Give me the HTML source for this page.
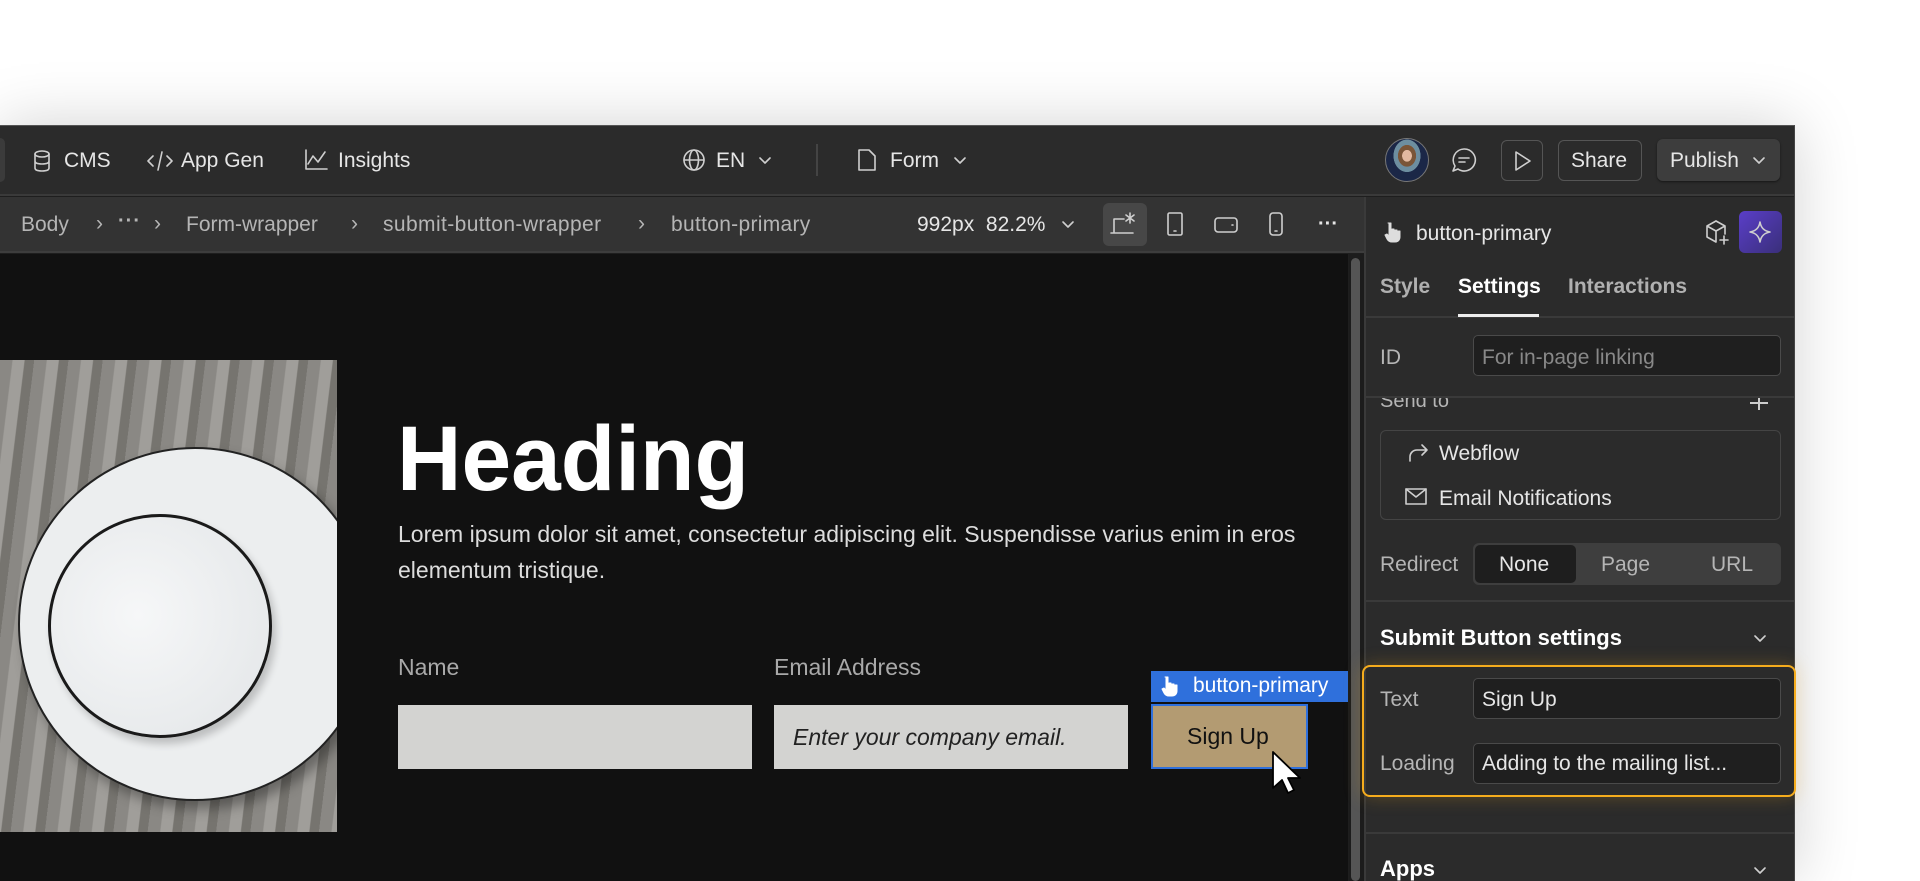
<!DOCTYPE html>
<html><head><meta charset="utf-8">
<style>
*{box-sizing:border-box;margin:0;padding:0}
html,body{width:1920px;height:881px;overflow:hidden}
body{background:#fff;font-family:"Liberation Sans",sans-serif;position:relative}
.a{position:absolute}
.win{left:0;top:125px;width:1795px;height:756px;background:#1e1e1e;box-shadow:0 0 60px rgba(0,0,0,.18);border-top:1px solid #555;border-right:1px solid #444}
.t{color:#e6e6e6;font-size:20px;white-space:nowrap}
.g{color:#b5b5b5}
.bc{font-size:21px}
svg{position:absolute;fill:none;stroke:#cfcfcf;stroke-width:1.6;stroke-linecap:round;stroke-linejoin:round}
.inp{background:#1f1f1f;border:1px solid #4a4a4a;border-radius:5px}
</style></head><body>
<div class="a win"></div>
<!-- top bar -->
<div class="a" style="left:0;top:126px;width:1794px;height:70px;background:#2b2b2b;border-bottom:2px solid #3a3a3a"></div>
<div class="a" style="left:0;top:138px;width:5px;height:44px;background:#3b3b3b;border-radius:0 5px 5px 0"></div>
<svg style="left:32px;top:150px" width="20" height="22" viewBox="0 0 20 22"><ellipse cx="10" cy="4" rx="7" ry="3"/><path d="M3 4v14c0 2 3 3 7 3s7-1 7-3V4M3 11c0 2 3 3 7 3s7-1 7-3"/></svg>
<div class="a t" style="left:64px;top:149px;font-size:21px">CMS</div>
<svg style="left:147px;top:150px" width="26" height="22" viewBox="0 0 26 22"><path d="M6 6l-5 5 5 5M20 6l5 5-5 5M15 2l-4 18"/></svg>
<div class="a t" style="left:181px;top:149px;font-size:21px">App Gen</div>
<svg style="left:304px;top:149px" width="24" height="22" viewBox="0 0 24 22"><path d="M2 1v19h21M4 15l5-8 5 6 7-10"/></svg>
<div class="a t" style="left:338px;top:149px;font-size:21px">Insights</div>
<svg style="left:682px;top:148px" width="24" height="24" viewBox="0 0 24 24"><circle cx="12" cy="12" r="10"/><ellipse cx="12" cy="12" rx="4.5" ry="10"/><path d="M2 12h20"/></svg>
<div class="a t" style="left:716px;top:149px;font-size:21px">EN</div>
<svg style="left:758px;top:156px" width="14" height="9" viewBox="0 0 14 9"><path d="M2 2l5 5 5-5"/></svg>
<div class="a" style="left:816px;top:144px;width:2px;height:32px;background:#444"></div>
<svg style="left:857px;top:148px" width="20" height="24" viewBox="0 0 20 24"><path d="M2 2h10l6 6v14H2z"/></svg>
<div class="a t" style="left:890px;top:149px;font-size:21px">Form</div>
<svg style="left:953px;top:156px" width="14" height="9" viewBox="0 0 14 9"><path d="M2 2l5 5 5-5"/></svg>
<div class="a" style="left:1385px;top:138px;width:44px;height:44px;border-radius:50%;background:radial-gradient(ellipse at 50% 40%,#e3b9a0 0 16%,#7a5538 17% 30%,#6d8ea0 31% 45%,#1b2747 46%);border:1px solid #777"></div>
<svg style="left:1451px;top:147px" width="26" height="26" viewBox="0 0 26 26"><path d="M13 2a11 11 0 1 1-6 20L2 24l2-5A11 11 0 0 1 13 2zM8 11h10M8 15h6"/></svg>
<div class="a" style="left:1501px;top:140px;width:42px;height:41px;border:1.5px solid #555;border-radius:6px"></div>
<svg style="left:1513px;top:150px" width="20" height="22" viewBox="0 0 20 22"><path d="M3 2l14 9-14 9z"/></svg>
<div class="a" style="left:1558px;top:140px;width:84px;height:41px;border:1.5px solid #555;border-radius:6px"></div>
<div class="a t" style="left:1571px;top:149px;font-size:21px">Share</div>
<div class="a" style="left:1657px;top:139px;width:123px;height:42px;background:#3d3d3d;border-radius:6px;box-shadow:0 1px 2px rgba(0,0,0,.5)"></div>
<div class="a t" style="left:1670px;top:149px;font-size:21px">Publish</div>
<svg style="left:1752px;top:156px" width="14" height="9" viewBox="0 0 14 9"><path d="M2 2l5 5 5-5"/></svg>
<!-- breadcrumb bar -->
<div class="a" style="left:0;top:197px;width:1364px;height:56px;background:#333;border-bottom:2px solid #3d3d3d"></div>
<div class="a t g bc" style="left:21px;top:213px">Body</div>
<div class="a t g bc" style="left:96px;top:212px">›</div>
<div class="a t g" style="left:118px;top:210px;font-weight:bold;letter-spacing:1px">···</div>
<div class="a t g bc" style="left:154px;top:212px">›</div>
<div class="a t g bc" style="left:186px;top:213px">Form-wrapper</div>
<div class="a t g bc" style="left:351px;top:212px">›</div>
<div class="a t g bc" style="left:383px;top:213px;letter-spacing:.4px">submit-button-wrapper</div>
<div class="a t g bc" style="left:638px;top:212px">›</div>
<div class="a t g bc" style="left:671px;top:213px;letter-spacing:.3px">button-primary</div>
<div class="a t bc" style="left:917px;top:213px">992px&nbsp; 82.2%</div>
<svg style="left:1061px;top:220px" width="14" height="9" viewBox="0 0 14 9"><path d="M2 2l5 5 5-5"/></svg>
<div class="a" style="left:1103px;top:203px;width:44px;height:43px;background:#474747;border-radius:6px"></div>
<svg style="left:1110px;top:211px" width="30" height="26" viewBox="0 0 30 26"><path d="M4 8v13M4 8h10M1 22h22M20 2v10M16 4l8 6M24 4l-8 6"/></svg>
<svg style="left:1165px;top:211px" width="20" height="26" viewBox="0 0 20 26"><rect x="3" y="2" width="14" height="22" rx="1.5"/><path d="M9 20h2"/></svg>
<svg style="left:1212px;top:216px" width="28" height="18" viewBox="0 0 28 18"><rect x="3" y="2" width="22" height="14" rx="3"/><path d="M20 9h1"/></svg>
<svg style="left:1266px;top:211px" width="20" height="26" viewBox="0 0 20 26"><rect x="4" y="2" width="12" height="22" rx="3"/><path d="M9 20h2"/></svg>
<div class="a t" style="left:1318px;top:213px;font-weight:bold">···</div>
<!-- canvas -->
<div class="a" style="left:0;top:254px;width:1348px;height:627px;background:#111"></div>
<div class="a" style="left:1349px;top:254px;width:15px;height:627px;background:#1c1c1c"></div>
<div class="a" style="left:1351px;top:258px;width:9px;height:623px;background:#555;border-radius:5px"></div>
<div class="a" style="left:0;top:360px;width:337px;height:472px;overflow:hidden;background:repeating-linear-gradient(97deg,#8a8884 0 12px,#a09e9a 13px 24px,#76746f 25px 34px);">
<div class="a" style="left:18px;top:87px;width:354px;height:354px;border-radius:50%;background:#eceeef;border:2px solid #222;box-shadow:6px 8px 12px rgba(0,0,0,.35)"></div>
<div class="a" style="left:48px;top:154px;width:224px;height:224px;border-radius:50%;background:radial-gradient(circle at 40% 45%,#f6f7f8,#e2e5e7);border:3px solid #1a1a1a;box-shadow:4px 6px 8px rgba(0,0,0,.2)"></div>
</div>
<div class="a" style="left:397px;top:404px;color:#fff;font-size:92px;font-weight:bold;line-height:110px;transform:scaleX(.97);transform-origin:left">Heading</div>
<div class="a" style="left:398px;top:516px;width:905px;color:#ddd;font-size:23px;line-height:36px">Lorem ipsum dolor sit amet, consectetur adipiscing elit. Suspendisse varius enim in eros elementum tristique.</div>
<div class="a" style="left:398px;top:654px;color:#a9a9a9;font-size:23px">Name</div>
<div class="a" style="left:774px;top:654px;color:#a9a9a9;font-size:23px">Email Address</div>
<div class="a" style="left:398px;top:705px;width:354px;height:64px;background:#d3d3d1"></div>
<div class="a" style="left:774px;top:705px;width:354px;height:64px;background:#d3d3d1"></div>
<div class="a" style="left:793px;top:724px;color:#222;font-size:23px;font-style:italic">Enter your company email.</div>
<div class="a" style="left:1151px;top:671px;width:197px;height:31px;background:#2f70dc"></div>
<svg style="left:1160px;top:675px;fill:#fff;stroke:#fff;stroke-width:1" width="20" height="22" viewBox="0 0 20 22"><path d="M5 2h3v8h1v-2h2v2h1v-1h2v2h1v-1h2v6c0 3-2 5-5 5H9c-2 0-4-1-5-3l-2-4 2-1 2 2V2z"/></svg>
<div class="a" style="left:1193px;top:674px;color:#fff;font-size:21px">button-primary</div>
<div class="a" style="left:1151px;top:704px;width:157px;height:65px;background:#b39b72;border:2px solid #2f70dc"></div>
<div class="a" style="left:1187px;top:723px;color:#111;font-size:23px">Sign Up</div>
<svg style="left:1270px;top:750px;fill:#fff;stroke:#000;stroke-width:1.8" width="34" height="48" viewBox="0 0 34 48"><path d="M3 2v36l9-8 6 13 6-3-6-12h12z"/></svg>
<!-- right panel -->
<div class="a" style="left:1364px;top:197px;width:430px;height:684px;background:#2b2b2b;border-left:2px solid #3a3a3a"></div>
<svg style="left:1383px;top:221px;fill:#ddd;stroke:#ddd;stroke-width:1" width="20" height="22" viewBox="0 0 20 22"><path d="M5 2h3v8h1v-2h2v2h1v-1h2v2h1v-1h2v6c0 3-2 5-5 5H9c-2 0-4-1-5-3l-2-4 2-1 2 2V2z"/></svg>
<div class="a t" style="left:1416px;top:222px;font-size:21px">button-primary</div>
<svg style="left:1704px;top:219px" width="26" height="28" viewBox="0 0 26 28"><path d="M12 2l9 5v8M12 2L3 7v11l9 5M3 7l9 5 9-5M12 12v11M20 17v8M16 21h8"/></svg>
<div class="a" style="left:1739px;top:211px;width:43px;height:42px;background:linear-gradient(135deg,#5a3ec8,#3a2f7a);border-radius:6px"></div>
<svg style="left:1748px;top:220px" width="24" height="24" viewBox="0 0 24 24"><path d="M12 2c1 6 4 9 10 10-6 1-9 4-10 10-1-6-4-9-10-10 6-1 9-4 10-10z"/></svg>
<div class="a" style="left:1380px;top:275px;color:#b0b0b0;font-size:21px;font-weight:bold">Style</div>
<div class="a" style="left:1458px;top:275px;color:#fff;font-size:21px;font-weight:bold">Settings</div>
<div class="a" style="left:1568px;top:275px;color:#b0b0b0;font-size:21px;font-weight:bold">Interactions</div>
<div class="a" style="left:1366px;top:316px;width:428px;height:2px;background:#3a3a3a"></div>
<div class="a" style="left:1458px;top:314px;width:81px;height:3px;background:#eee"></div>
<div class="a t g" style="left:1380px;top:346px;font-size:21px">ID</div>
<div class="a inp" style="left:1473px;top:335px;width:308px;height:41px"></div>
<div class="a" style="left:1482px;top:346px;color:#888;font-size:21px">For in-page linking</div>
<div class="a" style="left:1366px;top:396px;width:428px;height:2px;background:#3a3a3a"></div>
<div class="a" style="left:1366px;top:398px;width:428px;height:14px;overflow:hidden"><div class="a t g" style="left:14px;top:-8px">Send to</div></div>
<div class="a" style="left:1750px;top:402px;width:18px;height:2px;background:#ccc"></div>
<div class="a" style="left:1758px;top:398px;width:2px;height:12px;background:#ccc"></div>
<div class="a" style="left:1380px;top:430px;width:401px;height:90px;border:1.5px solid #444;border-radius:6px"></div>
<svg style="left:1407px;top:441px" width="22" height="22" viewBox="0 0 22 22"><path d="M3 20v-4c0-4 3-7 7-7h10M15 4l5 5-5 5"/></svg>
<div class="a t" style="left:1439px;top:442px;font-size:21px">Webflow</div>
<svg style="left:1404px;top:487px" width="24" height="20" viewBox="0 0 24 20"><rect x="2" y="2" width="20" height="15"/><path d="M2 2l10 8 10-8"/></svg>
<div class="a t" style="left:1439px;top:487px;font-size:21px">Email Notifications</div>
<div class="a t g" style="left:1380px;top:553px;font-size:21px">Redirect</div>
<div class="a" style="left:1473px;top:543px;width:308px;height:42px;background:#3e3e3e;border-radius:6px"></div>
<div class="a" style="left:1475px;top:545px;width:101px;height:38px;background:#1e1e1e;border-radius:5px"></div>
<div class="a t" style="left:1499px;top:553px;font-size:21px">None</div>
<div class="a t g" style="left:1601px;top:553px;font-size:21px">Page</div>
<div class="a t g" style="left:1711px;top:553px;font-size:21px">URL</div>
<div class="a" style="left:1366px;top:600px;width:428px;height:2px;background:#3a3a3a"></div>
<div class="a" style="left:1380px;top:625px;color:#fff;font-size:22px;font-weight:bold">Submit Button settings</div>
<svg style="left:1753px;top:634px" width="14" height="9" viewBox="0 0 14 9"><path d="M2 2l5 5 5-5"/></svg>
<div class="a" style="left:1362px;top:665px;width:434px;height:132px;border:2px solid #f5ac1d;border-radius:8px;box-shadow:0 0 18px rgba(245,172,29,.25)"></div>
<div class="a t g" style="left:1380px;top:688px;font-size:21px">Text</div>
<div class="a inp" style="left:1473px;top:678px;width:308px;height:41px"></div>
<div class="a t" style="left:1482px;top:688px;font-size:21px">Sign Up</div>
<div class="a t g" style="left:1380px;top:752px;font-size:21px">Loading</div>
<div class="a inp" style="left:1473px;top:743px;width:308px;height:41px"></div>
<div class="a t" style="left:1482px;top:752px;font-size:21px">Adding to the mailing list...</div>
<div class="a" style="left:1366px;top:832px;width:428px;height:2px;background:#3a3a3a"></div>
<div class="a" style="left:1380px;top:856px;color:#fff;font-size:22px;font-weight:bold">Apps</div>
<svg style="left:1753px;top:866px" width="14" height="9" viewBox="0 0 14 9"><path d="M2 2l5 5 5-5"/></svg>
</body></html>
